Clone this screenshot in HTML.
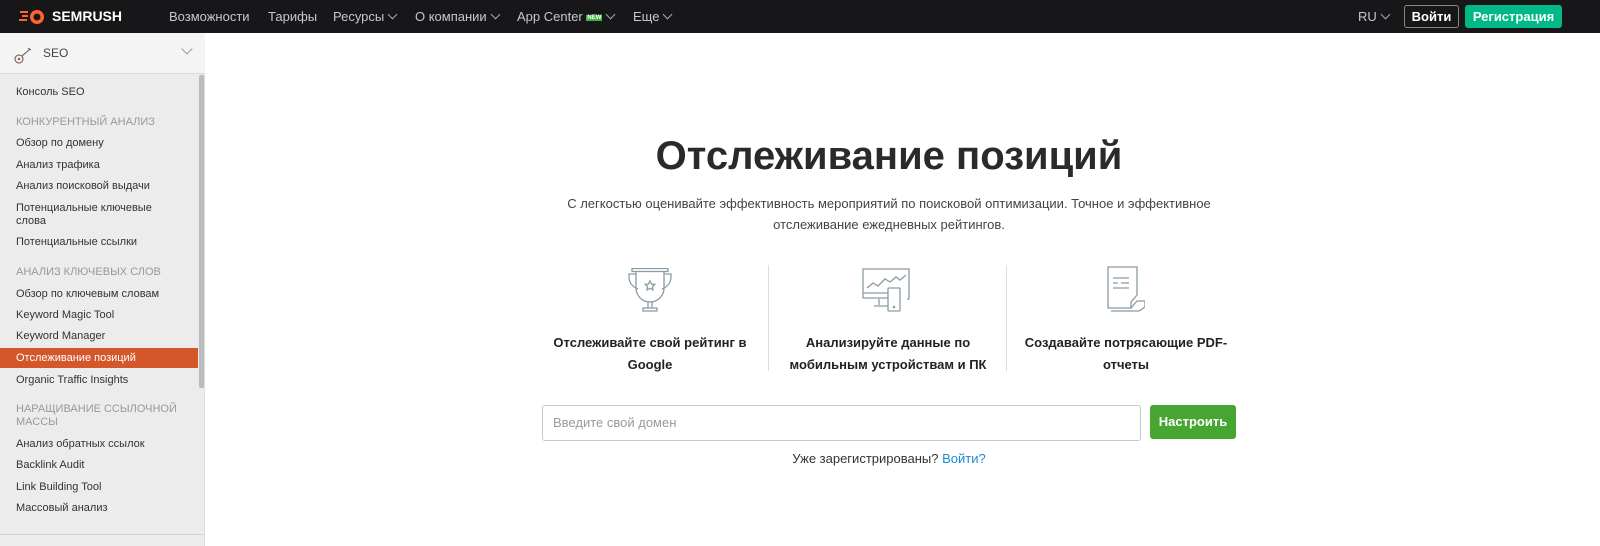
<!DOCTYPE html>
<html><head><meta charset="utf-8"><style>
*{margin:0;padding:0;box-sizing:border-box}
body{width:1600px;height:546px;overflow:hidden;background:#fff;font-family:"Liberation Sans","DejaVu Sans",sans-serif;position:relative}
.top{position:absolute;left:0;top:0;width:1600px;height:33px;background:#17171a}
.top span{position:absolute;top:9px;color:#c8c8cc;font-size:13px;white-space:nowrap}
.chev{display:inline-block;width:7px;height:7px;border-right:1px solid #aaa;border-bottom:1px solid #aaa;transform:rotate(45deg);margin-left:5px;position:relative;top:-3px}
.side{position:absolute;left:0;top:33px;width:205px;height:513px;background:#ececec;border-right:1px solid #ddd}
.sh{position:absolute;left:0;top:0;width:205px;height:41px;background:#f4f4f4;border-bottom:1px solid #ddd}
.it{position:absolute;left:16px;font-size:11px;color:#333;line-height:13px;white-space:nowrap}
.hd{position:absolute;left:16px;font-size:11px;color:#999;line-height:13px;white-space:nowrap}
.act{position:absolute;left:0;top:315px;width:198px;height:20px;background:#d4572b}
.c{position:absolute;text-align:center}
</style></head><body>
<div class="top">
<svg style="position:absolute;left:18px;top:9px" width="28" height="16" viewBox="0 0 28 16"><path d="M2 3h8M4 7h6M1 11h8" stroke="#ff642d" stroke-width="2"/><circle cx="19" cy="8" r="7" fill="#ff642d"/><circle cx="19" cy="8" r="3.5" fill="#17171a"/></svg>
<span style="left:52px;top:8px;color:#fff;font-weight:bold;font-size:14px">SEMRUSH</span>
<span style="left:169px">Возможности</span>
<span style="left:268px">Тарифы</span>
<span style="left:333px">Ресурсы<i class="chev"></i></span>
<span style="left:415px">О компании<i class="chev"></i></span>
<span style="left:517px">App Center <b style="background:#3fb53c;color:#fff;font-size:6px;padding:0 1px;position:relative;top:-2px">NEW</b><i class="chev"></i></span>
<span style="left:633px">Еще<i class="chev"></i></span>
<span style="left:1358px">RU<i class="chev"></i></span>
<div style="position:absolute;left:1404px;top:5px;width:55px;height:23px;border:1px solid #888;border-radius:3px;color:#fff;font-size:13px;font-weight:bold;text-align:center;line-height:21px">Войти</div>
<div style="position:absolute;left:1465px;top:5px;width:97px;height:23px;background:#00b987;border-radius:3px;color:#fff;font-size:13px;font-weight:bold;text-align:center;line-height:23px">Регистрация</div>
</div>
<div class="side">
<div class="sh">
<svg style="position:absolute;left:14px;top:12px" width="22" height="20" viewBox="0 0 22 20"><circle cx="5" cy="14" r="4" fill="none" stroke="#555"/><circle cx="5" cy="14" r="1.3" fill="#e04a1f"/><path d="M8 11l8-7M14 3l3 2" stroke="#555" fill="none"/></svg>
<span style="position:absolute;left:43px;top:13px;font-size:12px;color:#444">SEO</span>
<i style="position:absolute;left:183px;top:12px;width:8px;height:8px;border-right:1.5px solid #999;border-bottom:1.5px solid #999;transform:rotate(45deg)"></i>
</div>
<div style="position:absolute;left:199px;top:42px;width:5px;height:313px;background:#bbb;border-radius:2px"></div>
<div class="act"></div>
<div style="position:absolute;left:0;top:501px;width:205px;height:1px;background:#d5d5d5"></div>
</div>
<div class="it" style="top:86px">Консоль SEO</div>
<div class="hd" style="top:116px">КОНКУРЕНТНЫЙ АНАЛИЗ</div>
<div class="it" style="top:137px">Обзор по домену</div>
<div class="it" style="top:159px">Анализ трафика</div>
<div class="it" style="top:180px">Анализ поисковой выдачи</div>
<div class="it" style="top:202px">Потенциальные ключевые<br>слова</div>
<div class="it" style="top:236px">Потенциальные ссылки</div>
<div class="hd" style="top:266px">АНАЛИЗ КЛЮЧЕВЫХ СЛОВ</div>
<div class="it" style="top:288px">Обзор по ключевым словам</div>
<div class="it" style="top:309px">Keyword Magic Tool</div>
<div class="it" style="top:330px">Keyword Manager</div>
<div class="it" style="top:352px;color:#fff">Отслеживание позиций</div>
<div class="it" style="top:374px">Organic Traffic Insights</div>
<div class="hd" style="top:403px">НАРАЩИВАНИЕ ССЫЛОЧНОЙ<br>МАССЫ</div>
<div class="it" style="top:438px">Анализ обратных ссылок</div>
<div class="it" style="top:459px">Backlink Audit</div>
<div class="it" style="top:481px">Link Building Tool</div>
<div class="it" style="top:502px">Массовый анализ</div>
<div class="c" style="left:500px;width:778px;top:134px;font-size:40px;font-weight:bold;color:#2a2a2a">Отслеживание позиций</div>
<div class="c" style="left:500px;width:778px;top:193px;font-size:13px;color:#444;line-height:21px">С легкостью оценивайте эффективность мероприятий по поисковой оптимизации. Точное и эффективное<br>отслеживание ежедневных рейтингов.</div>
<div style="position:absolute;left:768px;top:265px;width:1px;height:106px;background:#ddd"></div>
<div style="position:absolute;left:1006px;top:265px;width:1px;height:106px;background:#ddd"></div>
<svg style="position:absolute;left:628px;top:268px" width="44" height="44" viewBox="0 0 44 44" fill="none" stroke="#8a9ba3" stroke-width="1.3"><rect x="4" y="0.5" width="36" height="3"/><path d="M8 4v16a14 14 0 0 0 28 0V4"/><path d="M8 6H1v3c0 6 4 10 9 12M36 6h7v3c0 6-4 10-9 12"/><path d="M20 33v7M24 33v7M15 40h14v3H15z"/><path d="M22 13l1.5 3 3.3.4-2.4 2.2.6 3.3L22 20.3l-3 1.6.6-3.3-2.4-2.2 3.3-.4z"/></svg>
<svg style="position:absolute;left:862px;top:268px" width="50" height="44" viewBox="0 0 50 44" fill="none" stroke="#8a9ba3" stroke-width="1.3"><path d="M26 30H1V1h46v30h-2"/><path d="M1 25h25M17 31v6M12 38h14"/><path d="M5 20l6-5 5 3 7-7 5 3 6-5 4 3 6-5"/><rect x="26" y="20" width="12" height="23" rx="1"/><circle cx="32" cy="39" r=".6"/></svg>
<svg style="position:absolute;left:1105px;top:266px" width="40" height="46" viewBox="0 0 40 46" fill="none" stroke="#8a9ba3" stroke-width="1.3"><path d="M3 1h29v28l-6 7v6H3z"/><path d="M26 42l6-7h8v6l-6 4H6"/><path d="M8 12h16M8 17h5M16 17h8M8 22h16"/></svg>
<div class="c" style="left:538px;width:224px;top:332px;font-size:13px;font-weight:bold;color:#222;line-height:22px">Отслеживайте свой рейтинг в<br>Google</div>
<div class="c" style="left:776px;width:224px;top:332px;font-size:13px;font-weight:bold;color:#222;line-height:22px">Анализируйте данные по<br>мобильным устройствам и ПК</div>
<div class="c" style="left:1014px;width:224px;top:332px;font-size:13px;font-weight:bold;color:#222;line-height:22px">Создавайте потрясающие PDF-<br>отчеты</div>
<div style="position:absolute;left:542px;top:405px;width:599px;height:36px;border:1px solid #c4c9cc;border-radius:3px;font-size:13px;color:#999;padding:9px 10px">Введите свой домен</div>
<div style="position:absolute;left:1150px;top:405px;width:86px;height:34px;background:#47a532;border-radius:3px;color:#fff;font-size:13px;font-weight:bold;text-align:center;line-height:34px">Настроить</div>
<div class="c" style="left:542px;width:694px;top:451px;font-size:13px;color:#333">Уже зарегистрированы? <span style="color:#1d8ad0">Войти?</span></div>
</body></html>
